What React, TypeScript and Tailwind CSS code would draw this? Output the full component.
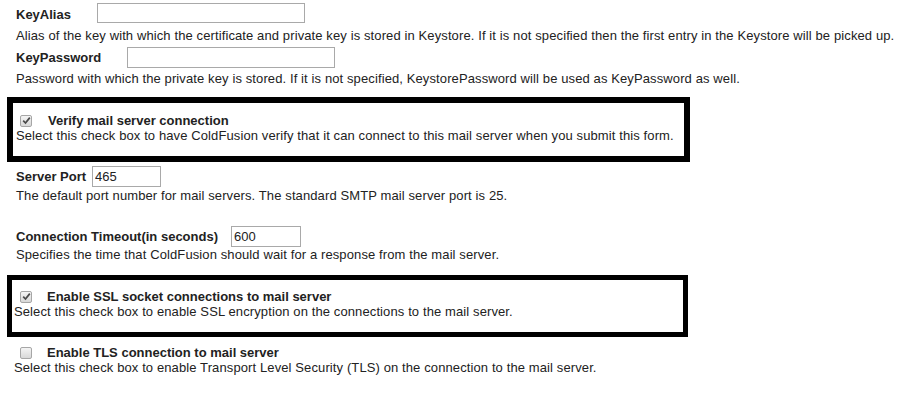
import React from "react";

function CheckBox({ checked }: { checked: boolean }) {
  return (
    <span className="inline-flex h-[12px] w-[12px] items-center justify-center rounded-[2px] border border-[#a6a6a6] bg-gradient-to-b from-[#f4f4f4] to-[#d8d8d8]">
      {checked && (
        <svg width="9" height="9" viewBox="0 0 9 9">
          <path d="M1.2 4.6 L3.5 7 L7.8 1.6" fill="none" stroke="#4a4a4a" strokeWidth="1.7" />
        </svg>
      )}
    </span>
  );
}

function TextBox({ value, width, height }: { value?: string; width: string; height: string }) {
  return (
    <input
      type="text"
      readOnly
      value={value ?? ""}
      className={`${width} ${height} border border-[#a9a9a9] bg-white px-[2px] text-[13px] text-[#222] outline-none`}
    />
  );
}

function Desc({ children, className = "" }: { children: React.ReactNode; className?: string }) {
  return <div className={`tracking-[0.11px] ${className}`}>{children}</div>;
}

export default function App() {
  return (
    <div
      className="min-h-[401px] w-[922px] bg-white text-[13px] leading-[15px] text-[#222]"
      style={{ fontFamily: '"Liberation Sans", Arial, sans-serif' }}
    >
      <div className="pl-[7px]">
        <div className="pl-[9px]">
          <div className="mt-[3px] flex h-[20px] items-center pt-[3px]">
            <span className="font-bold">KeyAlias</span>
            <span className="ml-[26px] -mt-[3px] flex">
              <TextBox width="w-[208px]" height="h-[20px]" />
            </span>
          </div>
          <Desc className="mt-[5px]">
            Alias of the key with which the certificate and private key is stored in Keystore. If it is not specified then the first entry in the Keystore will be picked up.
          </Desc>
          <div className="mt-[4px] flex h-[20px] items-center pt-[1px]">
            <span className="font-bold">KeyPassword</span>
            <span className="ml-[26px] flex">
              <TextBox width="w-[208px]" height="h-[21px]" />
            </span>
          </div>
          <Desc className="mt-[4px]">
            Password with which the private key is stored. If it is not specified, KeystorePassword will be used as KeyPassword as well.
          </Desc>
        </div>

        <div className="mt-[11px] w-[683px] border-[6px] border-black pl-[3px] pt-[10px] pb-[13px]">
          <div className="flex h-[15px] items-center">
            <span className="ml-[4px] flex">
              <CheckBox checked />
            </span>
            <span className="ml-[16px] font-bold">Verify mail server connection</span>
          </div>
          <Desc>Select this check box to have ColdFusion verify that it can connect to this mail server when you submit this form.</Desc>
        </div>

        <div className="pl-[9px]">
          <div className="mt-[4px] flex h-[21px] items-center">
            <span className="font-bold">Server Port</span>
            <span className="ml-[6px] flex">
              <TextBox value="465" width="w-[69px]" height="h-[21px]" />
            </span>
          </div>
          <Desc className="mt-[1px]">
            The default port number for mail servers. The standard SMTP mail server port is 25.
          </Desc>
          <div className="mt-[23px] flex h-[21px] items-center">
            <span className="font-bold">Connection Timeout(in seconds)</span>
            <span className="ml-[13px] flex">
              <TextBox value="600" width="w-[70px]" height="h-[21px]" />
            </span>
          </div>
          <Desc>Specifies the time that ColdFusion should wait for a response from the mail server.</Desc>
        </div>

        <div className="mt-[13px] w-[681px] border-[5px] border-black pl-[2px] pt-[9px] pb-[13px]">
          <div className="flex h-[15px] items-center pl-[6px]">
            <span className="flex">
              <CheckBox checked />
            </span>
            <span className="ml-[15px] font-bold">Enable SSL socket connections to mail server</span>
          </div>
          <Desc>Select this check box to enable SSL encryption on the connections to the mail server.</Desc>
        </div>

        <div className="mt-[8px] pl-[7px]">
          <div className="flex h-[15px] items-center pl-[6px]">
            <span className="flex">
              <CheckBox checked={false} />
            </span>
            <span className="ml-[15px] font-bold">Enable TLS connection to mail server</span>
          </div>
          <Desc>Select this check box to enable Transport Level Security (TLS) on the connection to the mail server.</Desc>
        </div>
      </div>
    </div>
  );
}
